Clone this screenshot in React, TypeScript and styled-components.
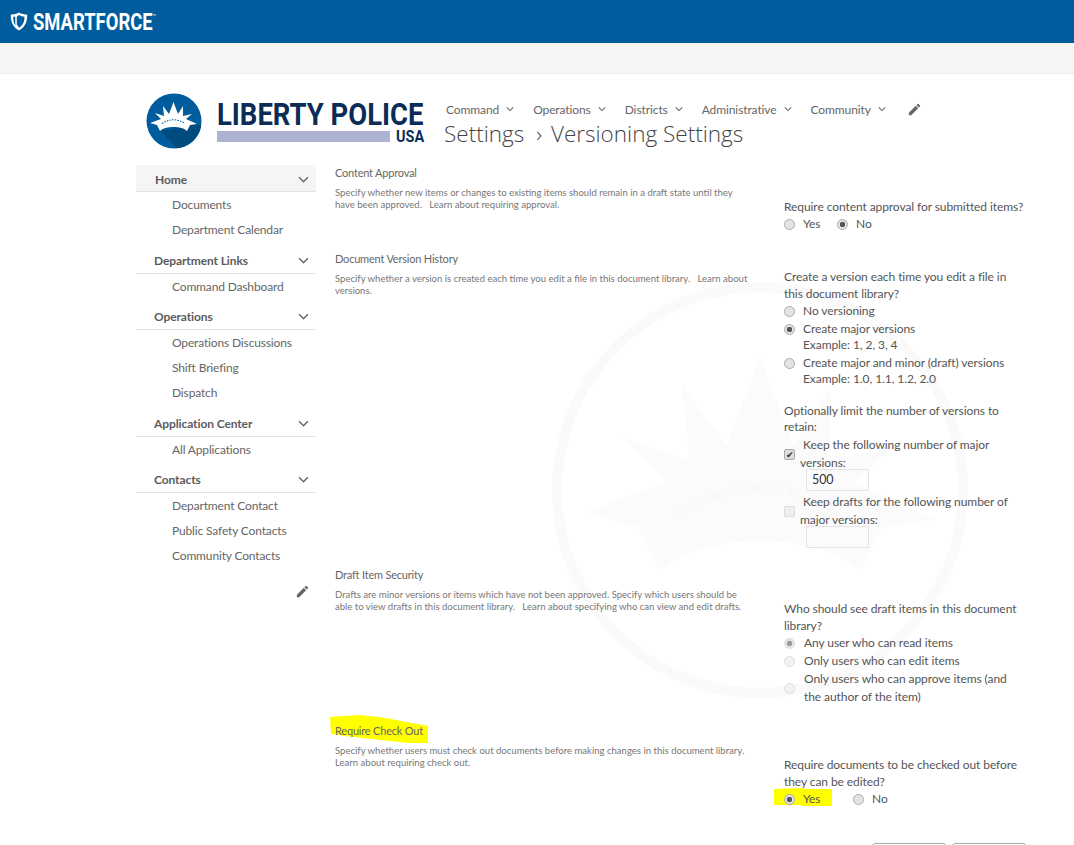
import { FC, ReactNode } from "react";
import styled, { createGlobalStyle } from "styled-components";
import { MdEdit } from "react-icons/md";

const GlobalStyle = createGlobalStyle`
  html, body {
    margin: 0;
    padding: 0;
    background: #fff;
  }
  body {
    font-family: Lato, "Noto Sans", sans-serif;
    color: #444;
  }
`;

const navItems = ["Command", "Operations", "Districts", "Administrative", "Community"];

const sideGroups = [
  { title: "Home", active: true, links: ["Documents", "Department Calendar"] },
  { title: "Department Links", links: ["Command Dashboard"] },
  { title: "Operations", links: ["Operations Discussions", "Shift Briefing", "Dispatch"] },
  { title: "Application Center", links: ["All Applications"] },
  { title: "Contacts", links: ["Department Contact", "Public Safety Contacts", "Community Contacts"] },
];

const crownRays =
  "M4 30L15 26 9 20l9 3-1-10 6 8 4.500-12L32 21l5-8v10l9-2-6 5 11 5-7 1-3 6c-5-5.500-22-5.500-27 0l-3-6z";

const Chevron: FC<{ size?: number }> = ({ size = 9 }) => (
  <svg width={size} height={size} viewBox="0 0 10 10" fill="none" stroke="#666" strokeWidth="1.3">
    <path d="M1 3l4 4 4-4" />
  </svg>
);

const ShieldIcon = () => (
  <svg width="18" height="19" viewBox="0 0 18 19">
    <path
      d="M9 .5C6.5 2 3.5 2.6.8 2.6c-.2 6.5 1.6 12.5 8.2 15.9 6.6-3.4 8.4-9.4 8.2-15.9C14.500 2.600 11.500 2 9 .5zM9 3l-2.200 1.800v7.400L9 15.800c3.900-2.400 5.600-6.200 5.500-11C12.500 4.600 10.600 4 9 3zM5.300 13.300C3.700 11.200 3.200 8 3.300 4.800c.6 0 1.200-.1 1.900-.2z"
      fill="#fff"
      fillRule="evenodd"
    />
  </svg>
);

const LibertyMark = () => (
  <svg width="56" height="56" viewBox="0 0 56 56">
    <circle cx="28" cy="28" r="27.500" fill="#005c9c" />
    <path d="M14 38l17 17.300A27.500 27.500 0 0 0 55.300 33L51 31z" fill="#004c7f" />
    <path d={crownRays} fill="#fff" />
    <path d="M16 30.500Q27.500 23 39 30.500" stroke="#005c9c" strokeWidth="1.100" strokeDasharray="1.500 1.200" fill="none" />
  </svg>
);

const Watermark = () => (
  <WatermarkSvg width="430" height="430" viewBox="0 0 430 430">
    <circle cx="215" cy="215" r="203" fill="none" stroke="#fafafa" strokeWidth="10" />
    <g transform="translate(215 215) scale(7.4) translate(-27.5 -27)">
      <path d={crownRays} fill="#fbfbfb" />
      <path d="M16 30.500Q27.500 23 39 30.500" stroke="#f9f9f9" strokeWidth="1.100" strokeDasharray="1.500 1.200" fill="none" />
    </g>
  </WatermarkSvg>
);

const Section: FC<{ title: string; desc: ReactNode; height: number; offset: number; children: ReactNode; marked?: boolean }> = ({
  title,
  desc,
  height,
  offset,
  children,
  marked,
}) => (
  <SectionRow $height={height}>
    <div>
      <SectionTitle>
        {marked && (
          <Marker width="100" height="29" viewBox="0 0 100 29">
            <path d="M1 2L29 0l22 2 48 9v17H79L16 21 2 19z" fill="#ffff00" />
          </Marker>
        )}
        <TitleText>{title}</TitleText>
      </SectionTitle>
      <SectionDesc>{desc}</SectionDesc>
    </div>
    <Controls $offset={offset}>{children}</Controls>
  </SectionRow>
);

const Option: FC<{ checked?: boolean; faded?: boolean; wide?: boolean; children: ReactNode }> = ({ checked, faded, wide, children }) => (
  <OptionRow $wide={wide}>
    <Radio $checked={checked} $faded={faded} />
    <span>{children}</span>
  </OptionRow>
);

export default function App() {
  return (
    <Page>
      <GlobalStyle />
      <TopBar>
        <ShieldIcon />
        <Brand>
          SMARTFORCE<sup>™</sup>
        </Brand>
      </TopBar>
      <SubBar />
      <Layout>
        <Header>
          <Logo>
            <LibertyMark />
            <LogoWords>
              <LogoName>LIBERTY POLICE</LogoName>
              <LogoFoot>
                <LogoBand />
                <LogoUsa>USA</LogoUsa>
              </LogoFoot>
            </LogoWords>
          </Logo>
          <HeaderRight>
            <Nav>
              {navItems.map((item) => (
                <NavItem key={item}>
                  {item}
                  <Chevron size={8} />
                </NavItem>
              ))}
              <NavEdit>
                <MdEdit size={15} color="#666" />
              </NavEdit>
            </Nav>
            <PageTitle>
              Settings<Crumb>›</Crumb>Versioning Settings
            </PageTitle>
          </HeaderRight>
        </Header>
        <Body>
          <Side>
            {sideGroups.map((g) => (
              <SideGroup key={g.title}>
                <SideHead $active={g.active}>
                  {g.title}
                  <Chevron size={11} />
                </SideHead>
                {g.links.map((l) => (
                  <SideLink key={l}>{l}</SideLink>
                ))}
              </SideGroup>
            ))}
            <SideEdit>
              <MdEdit size={15} color="#666" />
            </SideEdit>
          </Side>
          <Main>
            <Watermark />
            <Section
              title="Content Approval"
              height={86}
              offset={33}
              desc={"Specify whether new items or changes to existing items should remain in a draft state until they have been approved. \u00a0\u00a0Learn about requiring approval."}
            >
              <Question>Require content approval for submitted items?</Question>
              <InlineOptions>
                <InlineOption $width={53}>
                  <Radio />
                  <OptionLabel>Yes</OptionLabel>
                </InlineOption>
                <InlineOption $width={70}>
                  <Radio $checked />
                  <OptionLabel>No</OptionLabel>
                </InlineOption>
              </InlineOptions>
            </Section>
            <Section
              title="Document Version History"
              height={316}
              offset={17}
              desc={"Specify whether a version is created each time you edit a file in this document library. \u00a0\u00a0Learn about versions."}
            >
              <Question>Create a version each time you edit a file in this document library?</Question>
              <Option>No versioning</Option>
              <Option checked>Create major versions</Option>
              <Example>Example: 1, 2, 3, 4</Example>
              <Option>Create major and minor (draft) versions</Option>
              <Example>Example: 1.0, 1.1, 1.2, 2.0</Example>
              <LimitText>Optionally limit the number of versions to retain:</LimitText>
              <CheckLine>
                <Check $checked />
                Keep the following number of major versions:
              </CheckLine>
              <NumberBox>500</NumberBox>
              <CheckLine>
                <Check />
                Keep drafts for the following number of major versions:
              </CheckLine>
              <NumberBox />
            </Section>
            <Section
              title="Draft Item Security"
              height={156}
              offset={33}
              desc={"Drafts are minor versions or items which have not been approved. Specify which users should be able to view drafts in this document library. \u00a0\u00a0Learn about specifying who can view and edit drafts."}
            >
              <Question>Who should see draft items in this document library?</Question>
              <Option checked faded wide>
                Any user who can read items
              </Option>
              <Option faded wide>
                Only users who can edit items
              </Option>
              <Option faded wide>
                Only users who can approve items (and the author of the item)
              </Option>
            </Section>
            <Section
              marked
              title="Require Check Out"
              height={122}
              offset={33}
              desc="Specify whether users must check out documents before making changes in this document library. Learn about requiring check out."
            >
              <Question>Require documents to be checked out before they can be edited?</Question>
              <InlineOptions>
                <InlineOption $width={69}>
                  <RadioMarker width="60" height="19" viewBox="0 0 60 19">
                    <path d="M1 2l28-1 4 1h26v17H30l-3-1H1z" fill="#ffff00" />
                  </RadioMarker>
                  <Radio $checked />
                  <OptionLabel>Yes</OptionLabel>
                </InlineOption>
                <InlineOption $width={60}>
                  <Radio />
                  <OptionLabel>No</OptionLabel>
                </InlineOption>
              </InlineOptions>
              <Buttons>
                <Button />
                <Button />
              </Buttons>
            </Section>
          </Main>
        </Body>
      </Layout>
    </Page>
  );
}

const Page = styled.div`
  width: 1074px;
  height: 845px;
  overflow: hidden;
`;

const TopBar = styled.div`
  display: flex;
  align-items: center;
  gap: 5px;
  height: 43px;
  padding-left: 10px;
  box-sizing: border-box;
  background: #005c9c;
`;

const Brand = styled.div`
  font-family: Roboto, sans-serif;
  font-weight: 700;
  font-size: 23px;
  color: #fff;
  transform: scaleX(0.8);
  transform-origin: left center;
  white-space: nowrap;
  padding-top: 1px;
  sup {
    font-size: 7px;
    font-weight: 400;
    vertical-align: 11px;
    line-height: 0;
  }
`;

const SubBar = styled.div`
  height: 31px;
  background: #f6f6f6;
  border-bottom: 1px solid #eee;
  box-sizing: border-box;
`;

const Layout = styled.div`
  padding-left: 136px;
`;

const Header = styled.div`
  display: flex;
  height: 91px;
  padding-top: 19px;
  box-sizing: border-box;
`;

const Logo = styled.div`
  display: flex;
  gap: 15px;
  width: 308px;
  padding-left: 10px;
  box-sizing: border-box;
`;

const LogoWords = styled.div`
  display: flex;
  flex-direction: column;
  width: 208px;
  padding-top: 8px;
`;

const LogoName = styled.div`
  font-family: Roboto, sans-serif;
  font-weight: 700;
  font-size: 31px;
  line-height: 28px;
  height: 28px;
  color: #0b2c56;
  transform: scaleX(0.885);
  transform-origin: left center;
  white-space: nowrap;
`;

const LogoFoot = styled.div`
  display: flex;
  align-items: center;
  gap: 6px;
  height: 13px;
  margin-top: 1px;
`;

const LogoBand = styled.div`
  flex: none;
  width: 173px;
  height: 11px;
  background: #aeb3d2;
`;

const LogoUsa = styled.div`
  font-family: Roboto, sans-serif;
  font-weight: 700;
  font-size: 17px;
  line-height: 13px;
  color: #0b2c56;
  transform: scaleX(0.85);
  transform-origin: left center;
`;

const HeaderRight = styled.div`
  display: flex;
  flex-direction: column;
  padding-top: 8px;
`;

const Nav = styled.div`
  display: flex;
  align-items: center;
  height: 16px;
  padding-left: 2px;
`;

const NavItem = styled.div`
  display: flex;
  align-items: center;
  gap: 7px;
  margin-right: 19px;
  font-size: 12px;
  letter-spacing: -0.1px;
  color: #666;
  white-space: nowrap;
`;

const NavEdit = styled.div`
  display: flex;
  margin-left: 2px;
`;

const PageTitle = styled.div`
  margin-top: 2px;
  font-family: "Open Sans", sans-serif;
  font-weight: 300;
  font-size: 22.500px;
  line-height: 30px;
  color: #444;
  white-space: nowrap;
`;

const Crumb = styled.span`
  margin: 0 9px 0 12px;
`;

const Body = styled.div`
  display: flex;
`;

const Side = styled.div`
  display: flex;
  flex-direction: column;
  width: 180px;
  margin-right: 19px;
`;

const SideGroup = styled.div`
  padding-bottom: 5.500px;
`;

const SideHead = styled.div<{ $active?: boolean }>`
  display: flex;
  align-items: center;
  justify-content: space-between;
  height: ${({ $active }) => ($active ? "24px" : "25px")};
  padding: ${({ $active }) => ($active ? "2px 7px 0 19px" : "0 7px 0 18px")};
  border-bottom: 1px solid #e4e4e4;
  background: ${({ $active }) => ($active ? "#f5f5f5" : "transparent")};
  font-size: 12px;
  font-weight: 700;
  letter-spacing: -0.1px;
  color: #5c5c5c;
`;

const SideLink = styled.div`
  height: 25px;
  line-height: 25px;
  padding-left: 36px;
  font-size: 12px;
  letter-spacing: -0.15px;
  color: #666;
`;

const SideEdit = styled.div`
  display: flex;
  justify-content: flex-end;
  padding: 10px 6px 0 0;
`;

const Main = styled.div`
  position: relative;
  flex: 1;
  min-width: 0;
`;

const WatermarkSvg = styled.svg`
  position: absolute;
  left: 210px;
  top: 110px;
`;

const SectionRow = styled.div<{ $height: number }>`
  position: relative;
  display: grid;
  grid-template-columns: 416px 242px;
  column-gap: 33px;
  height: ${({ $height }) => $height}px;
`;

const SectionTitle = styled.div`
  position: relative;
  font-size: 11px;
  letter-spacing: -0.2px;
  line-height: 16px;
  color: #666;
`;

const TitleText = styled.span`
  position: relative;
`;

const Marker = styled.svg`
  position: absolute;
  left: -6px;
  top: -8px;
`;

const SectionDesc = styled.div`
  margin-top: 6px;
  font-size: 9.550px;
  line-height: 12px;
  color: #777;
`;

const Controls = styled.div<{ $offset: number }>`
  position: relative;
  padding-top: ${({ $offset }) => $offset}px;
  font-size: 12px;
  letter-spacing: -0.08px;
  line-height: 18px;
  color: #555;
`;

const Question = styled.div`
  line-height: 17px;
  color: #555;
`;

const InlineOptions = styled.div`
  display: flex;
`;

const InlineOption = styled.div<{ $width: number }>`
  position: relative;
  display: flex;
  align-items: center;
  gap: 8px;
  width: ${({ $width }) => $width}px;
`;

const OptionLabel = styled.span`
  position: relative;
`;

const RadioMarker = styled.svg`
  position: absolute;
  left: -11px;
  top: -3px;
`;

const OptionRow = styled.div<{ $wide?: boolean }>`
  display: flex;
  align-items: center;
  gap: ${({ $wide }) => ($wide ? "9px" : "8px")};
`;

const Radio = styled.span<{ $checked?: boolean; $faded?: boolean }>`
  position: relative;
  flex: none;
  width: 9px;
  height: 9px;
  border-radius: 50%;
  border: 1px solid ${({ $faded }) => ($faded ? "#ddd" : "#aaa")};
  background: ${({ $checked, $faded }) =>
    $checked
      ? `radial-gradient(circle, ${$faded ? "#999" : "#555"} 0 2.5px, #e4e4e4 3px)`
      : $faded
        ? "#f2f2f2"
        : "#e4e4e4"};
`;

const Example = styled.div`
  margin: -1px 0 1px;
  padding-left: 19px;
  line-height: 16px;
`;

const LimitText = styled.div`
  margin: 16px 0 1px;
  line-height: 16px;
`;

const CheckLine = styled.div`
  position: relative;
  padding-left: 16px;
  text-indent: 3px;
`;

const Check = styled.span<{ $checked?: boolean }>`
  position: absolute;
  left: 0;
  top: 13px;
  width: 9px;
  height: 9px;
  border: 1px solid ${({ $checked }) => ($checked ? "#aaa" : "#ddd")};
  border-radius: 2px;
  background: ${({ $checked }) => ($checked ? "#ddd" : "#eee")};
  text-indent: 0;
  font-size: 9px;
  line-height: 9px;
  text-align: center;
  &::after {
    content: "${({ $checked }) => ($checked ? "✔" : "")}";
    color: #333;
  }
`;

const NumberBox = styled.div`
  position: relative;
  box-sizing: border-box;
  width: 63px;
  height: 22px;
  margin: -3px 0 2px 22px;
  padding-left: 5px;
  border: 1px solid #e4e4e4;
  line-height: 20px;
  font-size: 12.500px;
  color: #333;
`;

const Buttons = styled.div`
  display: flex;
  gap: 6px;
  margin: 35px 0 0 88px;
`;

const Button = styled.div`
  width: 72px;
  height: 24px;
  border: 1px solid #aaa;
  border-radius: 3px;
  background: #fff;
`;
